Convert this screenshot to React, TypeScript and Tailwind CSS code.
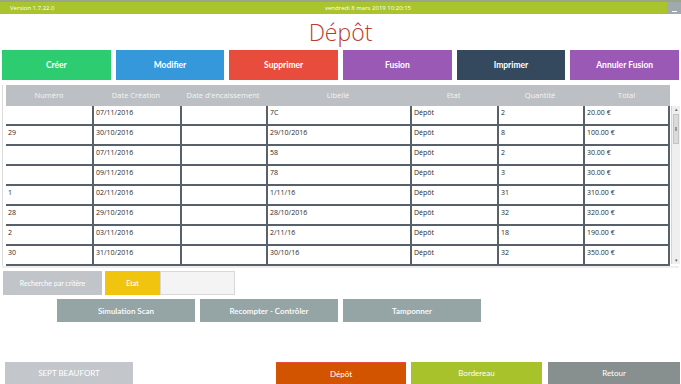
import React from 'react';

const cols = [
  { label: 'Numéro', w: 'w-[86px]' },
  { label: 'Date Création', w: 'w-[88px]' },
  { label: "Date d'encaissement", w: 'w-[86px]' },
  { label: 'Libellé', w: 'w-[144px]' },
  { label: 'Etat', w: 'w-[87px]' },
  { label: 'Quantité', w: 'w-[86px]' },
  { label: 'Total', w: 'w-[87px]' },
];

const rows = [
  ['', '07/11/2016', '', '7C', 'Dépôt', '2', '20.00 €'],
  ['29', '30/10/2016', '', '29/10/2016', 'Dépôt', '8', '100.00 €'],
  ['', '07/11/2016', '', '58', 'Dépôt', '2', '30.00 €'],
  ['', '09/11/2016', '', '78', 'Dépôt', '3', '30.00 €'],
  ['1', '02/11/2016', '', '1/11/16', 'Dépôt', '31', '310.00 €'],
  ['28', '29/10/2016', '', '28/10/2016', 'Dépôt', '32', '320.00 €'],
  ['2', '03/11/2016', '', '2/11/16', 'Dépôt', '18', '190.00 €'],
  ['30', '31/10/2016', '', '30/10/16', 'Dépôt', '32', '350.00 €'],
];

const actions = [
  { label: 'Créer', cls: 'bg-[#2ecc71]' },
  { label: 'Modifier', cls: 'bg-[#3498db]' },
  { label: 'Supprimer', cls: 'bg-[#e74c3c]' },
  { label: 'Fusion', cls: 'bg-[#9b59b6]' },
  { label: 'Imprimer', cls: 'bg-[#34495e]' },
  { label: 'Annuler Fusion', cls: 'bg-[#9b59b6]' },
];

export default function App() {
  return (
    <div className="w-[681px] h-[384px] bg-white flex flex-col overflow-hidden font-['Lato',sans-serif]">
      {/* status bar */}
      <div className="h-[14px] border-t-2 border-[#9aa58c] bg-[#a9c42c] flex items-center text-white text-[6px] font-['Open_Sans',sans-serif]">
        <span className="w-[300px] pl-[10px]">Version 1.7.22.0</span>
        <span className="flex-1 pl-[25px]">vendredi 8 mars 2019 10:20:15</span>
        <div className="w-[14px] h-full bg-[#a0aaae] flex items-end justify-center pb-[2px]">
          <div className="w-[5px] h-[1px] bg-white" />
        </div>
      </div>

      <div className="h-[35px] flex items-center justify-center">
        <h1 className="text-[23px] leading-none text-[#c0392b] font-['Open_Sans',sans-serif] font-light pt-[2px]">Dépôt</h1>
      </div>

      <div className="h-[30px] mt-[1px] px-[2px] grid grid-cols-6 gap-[5px]">
        {actions.map((a) => (
          <div key={a.label} className={`${a.cls} flex items-center justify-center text-white text-[8.5px] font-bold`}>
            {a.label}
          </div>
        ))}
      </div>

      {/* table */}
      <div className="mt-[5px] ml-[2px] mr-[1px] flex border-l border-[#dcdcdc] pl-[3px]">
        <div className="w-[664px]">
          <div className="flex h-[21px] bg-[#bcc0c4] text-[7.5px] text-[#f4f4f4] font-['Open_Sans',sans-serif]">
            {cols.map((c) => (
              <div key={c.label} className={`${c.w} flex items-center justify-center`}>{c.label}</div>
            ))}
          </div>
          {rows.map((r, i) => (
            <div key={i} className="flex h-[20px] border-b-2 border-[#56616b] text-[7px] text-[#2a2a2a] font-['Open_Sans',sans-serif]">
              {r.map((v, j) => (
                <div
                  key={j}
                  className={`${cols[j].w} pl-[2px] pt-[2px] ${j > 0 ? 'border-l-2 border-[#56616b]' : ''} ${j === 6 ? 'border-r-2 border-[#56616b]' : ''}`}
                >
                  {v}
                </div>
              ))}
            </div>
          ))}
        </div>
        <div className="w-[9px] ml-[1px] mt-[21px] h-[158px] bg-[#efefef] border-l border-[#d4d4d4] flex flex-col items-center">
          <div className="text-[5px] leading-none text-[#666] mt-[1px]">▴</div>
          <div className="w-[6px] h-[30px] mt-[2px] bg-[#dadada] border border-[#c4c4c4] flex items-center justify-center">
            <div className="w-[2px] h-[4px] border-x border-[#999]" />
          </div>
          <div className="flex-1" />
          <div className="text-[5px] leading-none text-[#666] mb-[1px]">▾</div>
        </div>
      </div>
      <div className="h-[2px] bg-[#eeeeee] mx-[2px]" />

      {/* criteria */}
      <div className="mt-[3px] ml-[3px] flex h-[24px] text-[7px] text-white">
        <div className="w-[99px] bg-[#c1c5c9] flex items-center justify-center">Recherche par critère</div>
        <div className="w-[55px] ml-[3px] bg-[#f1c40f] flex items-center justify-center font-semibold">Etat</div>
        <div className="w-[75px] bg-[#f4f4f4] border border-[#d8d8d8]" />
      </div>

      <div className="mt-[4px] ml-[57px] flex gap-[5px] h-[23px]">
        {['Simulation Scan', 'Recompter - Contrôler', 'Tamponner'].map((l) => (
          <div key={l} className="w-[138px] bg-[#95a5a6] flex items-center justify-center text-white text-[8px] font-semibold">
            {l}
          </div>
        ))}
      </div>

      {/* bottom bar */}
      <div className="mt-auto h-[22px] flex text-white text-[8px]">
        <div className="ml-[5px] w-[128px] bg-[#c3c7cb] flex items-center justify-center">SEPT BEAUFORT</div>
        <div className="flex-1" />
        <div className="w-[130px] bg-[#d35400] border-t border-[#e74c3c] flex items-center justify-center">Dépôt</div>
        <div className="w-[131px] ml-[5px] bg-[#a8c22c] flex items-center justify-center">Bordereau</div>
        <div className="w-[132px] ml-[6px] mr-[1px] bg-[#888f8f] flex items-center justify-center">Retour</div>
      </div>
    </div>
  );
}
